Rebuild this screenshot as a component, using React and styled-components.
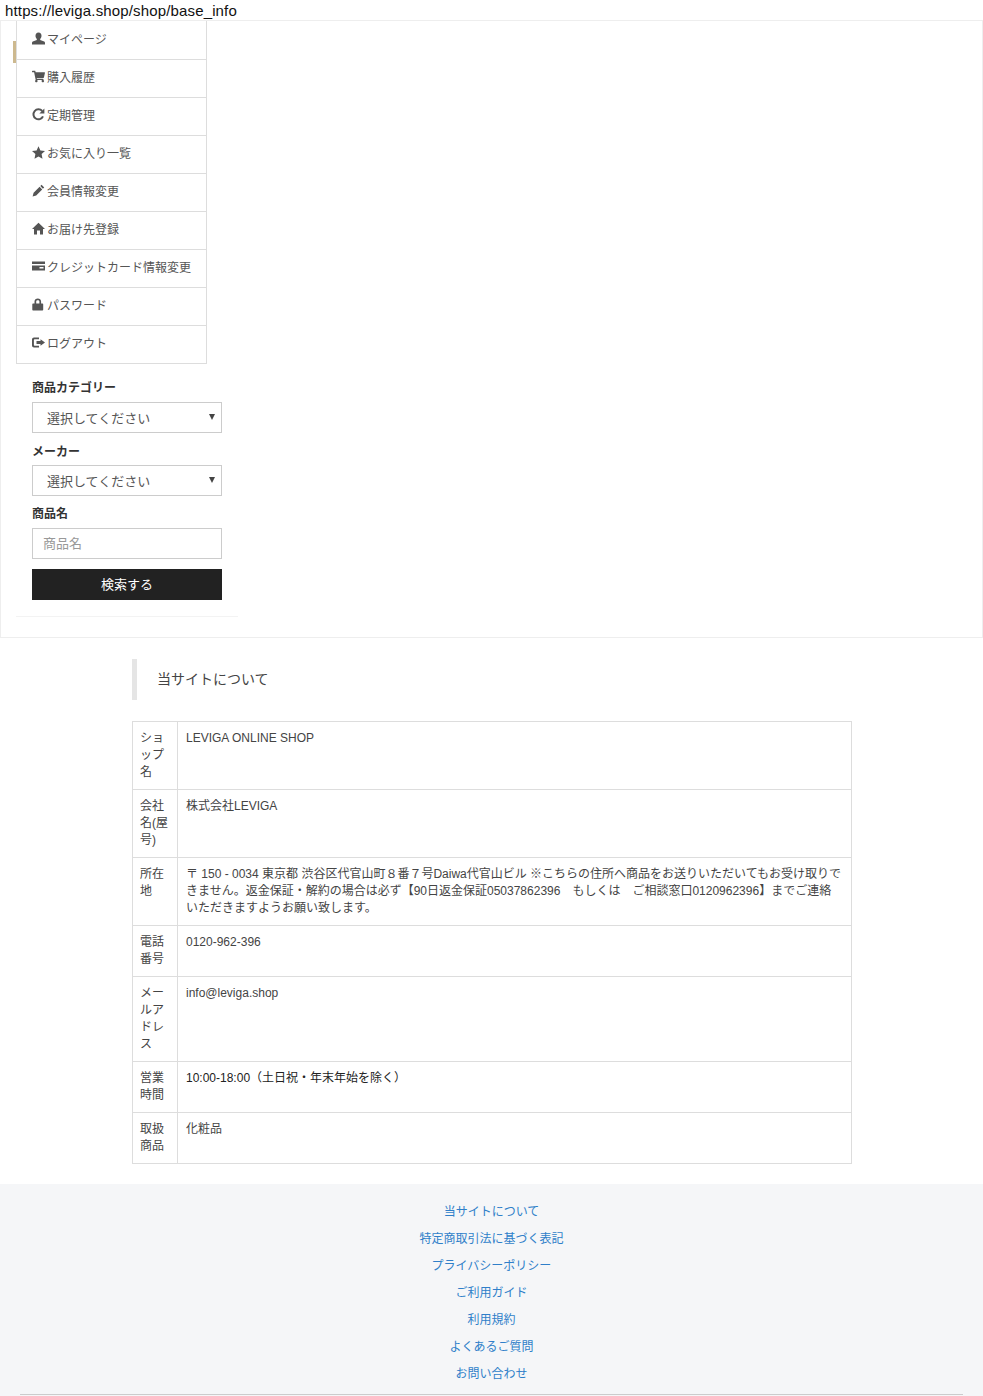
import React from "react";
import styled, { createGlobalStyle } from "styled-components";
import { FaShoppingCart } from "react-icons/fa";

const Global = createGlobalStyle`
  html, body { margin: 0; padding: 0; background: #fff; }
  body {
    font-family: "Liberation Sans", "Noto Sans CJK JP", sans-serif;
    font-size: 12px;
    color: #333;
  }
  * { box-sizing: border-box; }
`;

const Page = styled.div`
  width: 983px;
  height: 1396px;
  overflow: hidden;
`;

const UrlLine = styled.div`
  height: 20px;
  padding: 3px 0 0 5px;
  font-size: 15px;
  letter-spacing: 0.15px;
  line-height: 16px;
  color: #111;
`;

const Panel = styled.div`
  position: relative;
  height: 618px;
  border: 1px solid #eee;
  padding: 0 0 0 15px;
`;

const LogoEdge = styled.div`
  position: absolute;
  left: 12px;
  top: 20px;
  width: 4px;
  height: 22px;
  background: #cdb98f;
`;

const Menu = styled.ul`
  position: relative;
  list-style: none;
  margin: 0;
  padding: 1px 0 0;
  width: 191px;
  background: #fff;
  border-left: 1px solid #ddd;
  border-right: 1px solid #ddd;
`;

const MenuItem = styled.li`
  display: flex;
  align-items: center;
  gap: 2px;
  height: 38px;
  padding: 0 0 4px 15px;
  font-size: 12px;
  color: #555;
  border-bottom: 1px solid #ddd;
`;

const IconSlot = styled.span`
  display: inline-flex;
  align-items: center;
  justify-content: center;
  width: 13px;
  height: 13px;
  color: #555;
  font-size: 13px;
`;

const SearchBox = styled.form`
  width: 222px;
  height: 253px;
  padding: 16px 16px 0;
  border-bottom: 1px solid #f3f3f3;
`;

const Label = styled.div`
  font-size: 12px;
  line-height: 17px;
  font-weight: 700;
  color: #333;
  margin-bottom: ${(p) => p.$gap}px;
`;

const SelectBox = styled.div`
  position: relative;
  height: 31px;
  width: 190px;
  border: 1px solid #ccc;
  padding-left: 14px;
  font-size: 13px;
  line-height: 32px;
  color: #555;
  margin-bottom: ${(p) => p.$gap}px;
  &::after {
    content: "";
    position: absolute;
    right: 6px;
    top: 11px;
    border-left: 3px solid transparent;
    border-right: 3px solid transparent;
    border-top: 6px solid #444;
  }
`;

const TextInput = styled.input`
  display: block;
  width: 190px;
  height: 31px;
  border: 1px solid #ccc;
  border-radius: 0;
  outline: 0;
  padding: 0 10px;
  margin: 0 0 10px;
  font: inherit;
  font-size: 13px;
  &::placeholder { color: #999; opacity: 1; }
`;

const SearchButton = styled.button`
  display: block;
  width: 190px;
  height: 31px;
  border: 0;
  padding: 0 0 2px;
  background: #222;
  color: #fff;
  font: inherit;
  font-size: 13px;
`;

const Content = styled.main`
  width: 720px;
  margin: 21px 0 0 132px;
`;

const Heading = styled.h2`
  height: 41px;
  margin: 0 0 21px;
  padding-left: 20px;
  border-left: 5px solid #e5e5e5;
  font-size: 14px;
  font-weight: 400;
  line-height: 41px;
  color: #444;
`;

const InfoTable = styled.table`
  width: 720px;
  border-collapse: collapse;
  table-layout: fixed;
  font-size: 12px;
  line-height: 17px;
`;

const HeadCol = styled.col`
  width: 45px;
`;

const HeadCell = styled.th`
  padding: 8px 8px 8px 7px;
  border: 1px solid #ddd;
  font-weight: 400;
  text-align: left;
  vertical-align: top;
  color: #444;
`;

const BodyCell = styled.td`
  padding: 8px;
  border: 1px solid #ddd;
  vertical-align: top;
  color: ${(p) => (p.$dark ? "#222" : "#444")};
`;

const Footer = styled.footer`
  height: 212px;
  margin-top: 20px;
  padding-top: 20px;
  background: #f5f6f8;
`;

const FooterLinks = styled.nav`
  display: flex;
  flex-direction: column;
  align-items: center;
  gap: 10px;
  height: 191px;
  width: 943px;
  margin-left: 20px;
  border-bottom: 1px solid #ccc;
`;

const FooterLink = styled.a`
  font-size: 12px;
  line-height: 17px;
  color: #2f7fc9;
  text-decoration: none;
`;

const Glyph = ({ children }) => (
  <svg width="13" height="13" viewBox="0 0 13 13" fill="currentColor">
    {children}
  </svg>
);

const UserIcon = () => (
  <Glyph>
    <path d="M6.5 0.5c-2 0-3 1.4-3 3.3 0 1.3 0.5 2.5 1.3 3.2v1L0.8 9.6C0.3 9.9 0 10.3 0 10.9V12.5h13v-1.6c0-0.6-0.3-1-0.8-1.3L8.2 8V7c0.8-0.7 1.3-1.9 1.3-3.2 0-1.9-1-3.3-3-3.3z" />
  </Glyph>
);

const RefreshIcon = () => (
  <svg width="13" height="13" viewBox="0 0 13 13" fill="none" stroke="currentColor" strokeWidth="2">
    <path d="M11 8.4A5 5 0 1 1 10.2 3" />
    <path d="M12.4 0.6v5h-5z" fill="currentColor" stroke="none" />
  </svg>
);

const StarIcon = () => (
  <Glyph>
    <path d="M6.5 0.3l1.9 4.2 4.6 0.5-3.4 3.1 0.9 4.6-4-2.3-4 2.3 0.9-4.6L0 5l4.6-0.5z" />
  </Glyph>
);

const PencilIcon = () => (
  <Glyph>
    <path d="M9.6 0.8l2.6 2.6-1.3 1.3-2.6-2.6zM7.6 2.8l2.6 2.6-6 6L0.6 12.4l1-3.6z" />
  </Glyph>
);

const HomeIcon = () => (
  <Glyph>
    <path d="M6.5 0.8L13 7h-2v5.5H8V8.5H5v4H2V7H0z" />
  </Glyph>
);

const CardIcon = () => (
  <Glyph>
    <path d="M0 1.5h13v2.5H0z" />
    <path d="M0 5.5h13v5H0zM7.5 7v1.5h4V7z" fillRule="evenodd" />
  </Glyph>
);

const LockIcon = () => (
  <Glyph>
    <path d="M1 5.5h1.5V3.6C2.5 1.6 4 0.5 5.8 0.5s3.3 1.1 3.3 3.1v1.9H10.5c0.4 0 0.7 0.3 0.7 0.7v5.6c0 0.4-0.3 0.7-0.7 0.7H1c-0.4 0-0.7-0.3-0.7-0.7V6.2c0-0.4 0.3-0.7 0.7-0.7zM4.2 5.5h3.2V3.6c0-0.9-0.7-1.4-1.6-1.4s-1.6 0.5-1.6 1.4z" fillRule="evenodd" />
  </Glyph>
);

const LogoutIcon = () => (
  <Glyph>
    <path d="M2 1.5h5v1.8H2.6c-0.4 0-0.7 0.3-0.7 0.7v5c0 0.4 0.3 0.7 0.7 0.7H7v1.8H2c-1.1 0-2-0.9-2-2V3.5c0-1.1 0.9-2 2-2z" />
    <path d="M8.5 3.2L13 6.5 8.5 9.8V8H4.5V5h4z" />
  </Glyph>
);

const menuItems = [
  [<UserIcon />, "マイページ"],
  [<FaShoppingCart />, "購入履歴"],
  [<RefreshIcon />, "定期管理"],
  [<StarIcon />, "お気に入り一覧"],
  [<PencilIcon />, "会員情報変更"],
  [<HomeIcon />, "お届け先登録"],
  [<CardIcon />, "クレジットカード情報変更"],
  [<LockIcon />, "パスワード"],
  [<LogoutIcon />, "ログアウト"],
];

const rows = [
  ["ショップ名", "LEVIGA ONLINE SHOP"],
  ["会社名(屋号)", "株式会社LEVIGA"],
  ["所在地", "〒 150 - 0034 東京都 渋谷区代官山町８番７号Daiwa代官山ビル ※こちらの住所へ商品をお送りいただいてもお受け取りできません。返金保証・解約の場合は必ず【90日返金保証05037862396　もしくは　ご相談窓口0120962396】までご連絡いただきますようお願い致します。"],
  ["電話番号", "0120-962-396"],
  ["メールアドレス", "info@leviga.shop"],
  ["営業時間", "10:00-18:00（土日祝・年末年始を除く）", true],
  ["取扱商品", "化粧品"],
];

const footerLinks = [
  "当サイトについて",
  "特定商取引法に基づく表記",
  "プライバシーポリシー",
  "ご利用ガイド",
  "利用規約",
  "よくあるご質問",
  "お問い合わせ",
];

export default function App() {
  return (
    <Page>
      <Global />
      <UrlLine>https://leviga.shop/shop/base_info</UrlLine>
      <Panel>
        <LogoEdge />
        <Menu>
          {menuItems.map(([icon, label]) => (
            <MenuItem key={label}>
              <IconSlot>{icon}</IconSlot>
              {label}
            </MenuItem>
          ))}
        </Menu>
        <SearchBox>
          <Label $gap={5}>商品カテゴリー</Label>
          <SelectBox $gap={11}>選択してください</SelectBox>
          <Label $gap={4}>メーカー</Label>
          <SelectBox $gap={10}>選択してください</SelectBox>
          <Label $gap={5}>商品名</Label>
          <TextInput placeholder="商品名" />
          <SearchButton type="button">検索する</SearchButton>
        </SearchBox>
      </Panel>
      <Content>
        <Heading>当サイトについて</Heading>
        <InfoTable>
          <colgroup>
            <HeadCol />
            <col />
          </colgroup>
          <tbody>
            {rows.map(([head, value, dark]) => (
              <tr key={head}>
                <HeadCell>{head}</HeadCell>
                <BodyCell $dark={dark}>{value}</BodyCell>
              </tr>
            ))}
          </tbody>
        </InfoTable>
      </Content>
      <Footer>
        <FooterLinks>
          {footerLinks.map((label) => (
            <FooterLink key={label} href="#">{label}</FooterLink>
          ))}
        </FooterLinks>
      </Footer>
    </Page>
  );
}
